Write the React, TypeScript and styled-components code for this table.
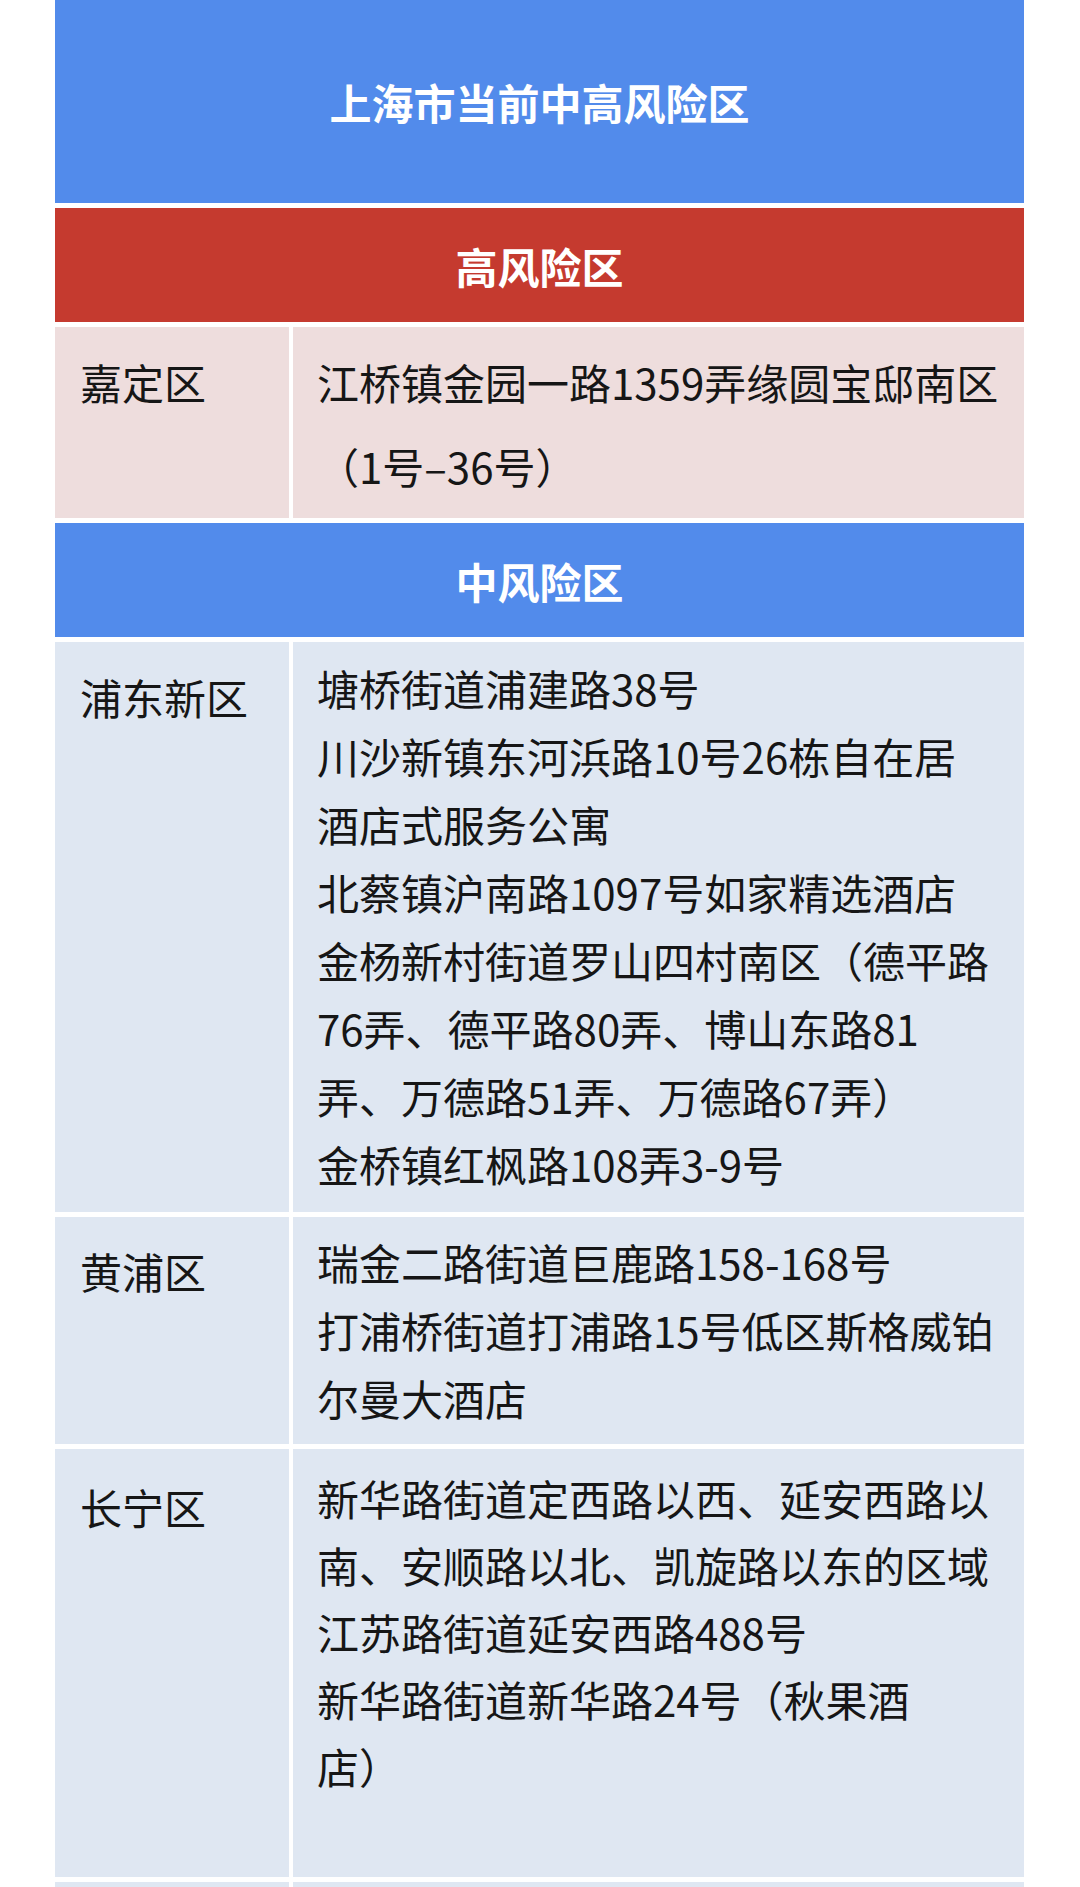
import React from "react";
import styled, { createGlobalStyle } from "styled-components";

const GlobalStyle = createGlobalStyle`
  html, body {
    margin: 0;
    padding: 0;
    background: #ffffff;
  }
  body {
    font-family: "Noto Sans CJK SC", "Noto Sans", "Liberation Sans", sans-serif;
    -webkit-font-smoothing: antialiased;
  }
`;

type Tone = "blue" | "red";
type Tint = "pink" | "sky";

const toneColor: Record<Tone, string> = {
  blue: "#528beb",
  red: "#c53a2f",
};

const tintColor: Record<Tint, string> = {
  pink: "#eedddd",
  sky: "#dfe7f2",
};

const Table = styled.div`
  width: 969px;
  margin-left: 55px;
  display: flex;
  flex-direction: column;
  gap: 5px;
`;

const Banner = styled.div<{ $tone: Tone; $height: number }>`
  height: ${(p) => p.$height}px;
  background: ${(p) => toneColor[p.$tone]};
  color: #ffffff;
  display: flex;
  align-items: center;
  justify-content: center;
  font-size: 42px;
  font-weight: 700;
`;

const Row = styled.div`
  display: grid;
  grid-template-columns: 234px 1fr;
  column-gap: 4px;
`;

const DistrictCell = styled.div<{ $tint: Tint; $top: number }>`
  background: ${(p) => tintColor[p.$tint]};
  padding: ${(p) => p.$top}px 0 0 25px;
  font-size: 42px;
  line-height: 68px;
  color: #161616;
`;

const AddressCell = styled.div<{
  $tint: Tint;
  $top: number;
  $bottom: number;
  $lineHeight: number;
}>`
  background: ${(p) => tintColor[p.$tint]};
  padding: ${(p) => p.$top}px 0 ${(p) => p.$bottom}px 24px;
  font-size: 42px;
  line-height: ${(p) => p.$lineHeight}px;
  color: #161616;
  white-space: nowrap;
`;

const Address = styled.div`
  display: block;
`;

type Entry = {
  district: string;
  addresses: string[][];
  districtTop: number;
  top: number;
  bottom: number;
  lineHeight: number;
};

const highRisk: Entry[] = [
  {
    district: "嘉定区",
    addresses: [["江桥镇金园一路1359弄缘圆宝邸南区", "（1号–36号）"]],
    districtTop: 21,
    top: 13,
    bottom: 10,
    lineHeight: 84,
  },
];

const midRisk: Entry[] = [
  {
    district: "浦东新区",
    addresses: [
      ["塘桥街道浦建路38号"],
      ["川沙新镇东河浜路10号26栋自在居", "酒店式服务公寓"],
      ["北蔡镇沪南路1097号如家精选酒店"],
      [
        "金杨新村街道罗山四村南区（德平路",
        "76弄、德平路80弄、博山东路81",
        "弄、万德路51弄、万德路67弄）",
      ],
      ["金桥镇红枫路108弄3-9号"],
    ],
    districtTop: 21,
    top: 12,
    bottom: 14,
    lineHeight: 68,
  },
  {
    district: "黄浦区",
    addresses: [
      ["瑞金二路街道巨鹿路158-168号"],
      ["打浦桥街道打浦路15号低区斯格威铂", "尔曼大酒店"],
    ],
    districtTop: 20,
    top: 11,
    bottom: 12,
    lineHeight: 68,
  },
  {
    district: "长宁区",
    addresses: [
      ["新华路街道定西路以西、延安西路以", "南、安顺路以北、凯旋路以东的区域"],
      ["江苏路街道延安西路488号"],
      ["新华路街道新华路24号（秋果酒", "店）"],
    ],
    districtTop: 24,
    top: 15,
    bottom: 78,
    lineHeight: 67,
  },
  {
    district: "",
    addresses: [[""]],
    districtTop: 20,
    top: 12,
    bottom: 12,
    lineHeight: 68,
  },
];

function RiskRow({ entry, tint }: { entry: Entry; tint: Tint }) {
  return (
    <Row>
      <DistrictCell $tint={tint} $top={entry.districtTop}>
        {entry.district}
      </DistrictCell>
      <AddressCell
        $tint={tint}
        $top={entry.top}
        $bottom={entry.bottom}
        $lineHeight={entry.lineHeight}
      >
        {entry.addresses.map((lines, i) => (
          <Address key={i}>
            {lines.map((line, j) => (
              <React.Fragment key={j}>
                {j > 0 && <br />}
                {line || "\u00a0"}
              </React.Fragment>
            ))}
          </Address>
        ))}
      </AddressCell>
    </Row>
  );
}

export default function App() {
  return (
    <>
      <GlobalStyle />
      <Table>
        <Banner $tone="blue" $height={203}>
          上海市当前中高风险区
        </Banner>
        <Banner $tone="red" $height={114}>
          高风险区
        </Banner>
        {highRisk.map((e) => (
          <RiskRow key={e.district} entry={e} tint="pink" />
        ))}
        <Banner $tone="blue" $height={114}>
          中风险区
        </Banner>
        {midRisk.map((e, i) => (
          <RiskRow key={i} entry={e} tint="sky" />
        ))}
      </Table>
    </>
  );
}
